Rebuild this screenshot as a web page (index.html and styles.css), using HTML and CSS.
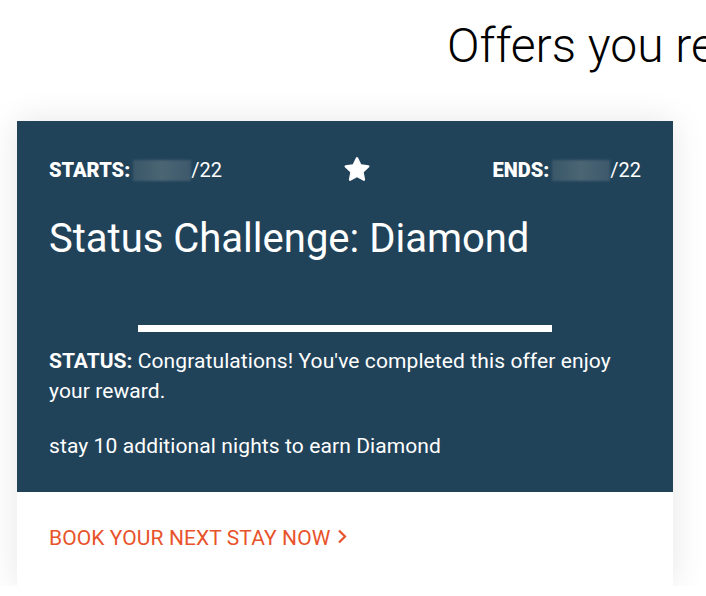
FILE: index.html
```html
<!DOCTYPE html>
<html lang="en">
<head>
  <meta charset="UTF-8" />
  <meta name="viewport" content="width=device-width, initial-scale=1.0"/>
  <title>Offers</title>
  <link rel="stylesheet" href="styles.css">
</head>
<body>
  <h1 class="page-title">Offers you re</h1>

  <div class="offer-card">
    <div class="offer-main">
      <div class="offer-dates">
        <div class="date"><b>STARTS:</b><span class="blur"></span>/22</div>
        <svg class="star" width="30" height="29" viewBox="0 0 24 24">
          <path d="M12 1.6c.4 0 .7.2.9.6l2.6 5.5 6 .8c.8.1 1.1 1.1.5 1.6l-4.4 4.2 1.1 6c.1.8-.7 1.4-1.4 1L12 18.4l-5.3 2.9c-.7.4-1.5-.2-1.4-1l1.1-6-4.4-4.2c-.6-.5-.3-1.5.5-1.6l6-.8 2.6-5.5c.2-.4.5-.6.9-.6z" fill="#fff"/>
        </svg>
        <div class="date"><b>ENDS:</b><span class="blur"></span>/22</div>
      </div>

      <h2 class="offer-title">Status Challenge: Diamond</h2>

      <div class="progress"></div>

      <p class="status"><b>STATUS:</b> Congratulations! You've completed this offer enjoy your reward.</p>
      <p class="status">stay 10 additional nights to earn Diamond</p>
    </div>
    <div class="offer-footer">
      <a class="book-link" href="#">BOOK YOUR NEXT STAY NOW
        <svg class="chev" width="10" height="15" viewBox="0 0 10 15">
          <path d="M2 1.5l6 6-6 6" fill="none" stroke="#e8532b" stroke-width="2.2"/>
        </svg>
      </a>
    </div>
  </div>
</body>
</html>
```

FILE: styles.css
```css
body {
  margin: 0;
  font-family: Roboto, "Liberation Sans", sans-serif;
  background-color: #fff;
  overflow: hidden;
}

.page-title {
  margin: 0;
  padding: 22px 0 0 447px;
  font-size: 48px;
  font-weight: 300;
  line-height: 48px;
  white-space: nowrap;
  color: #000;
}

.offer-card {
  width: 656px;
  margin: 51px 0 0 17px;
  box-shadow: 0 0 32px rgba(0,0,0,0.1);
}

.offer-main {
  background-color: #21435a;
  color: white;
  padding: 36px 32px 31px;
}

.offer-dates {
  display: flex;
  justify-content: space-between;
  align-items: center;
  font-size: 20px;
  height: 26px;
}

.date b {
  font-weight: 900;
}

.blur {
  display: inline-block;
  width: 58px;
  height: 21px;
  margin-left: 3px;
  vertical-align: -4px;
  background: linear-gradient(90deg, #3a5869, #4b6573 50%, #3d596b);
  filter: blur(1px);
}

.star {
  margin-top: -1px;
}

.offer-title {
  margin: 32px 0 0;
  font-size: 40px;
  font-weight: 400;
  line-height: 48px;
}

.progress {
  width: 414px;
  height: 7px;
  margin: 62px auto 0;
  background-color: white;
}

.status {
  margin: 14px 0 0;
  font-size: 21px;
  line-height: 30px;
  letter-spacing: 0.1px;
}

.status + .status {
  margin-top: 25px;
}

.status b {
  font-weight: 700;
  letter-spacing: 0;
}

.offer-footer {
  background-color: white;
  padding: 34px 32px 36px;
}

.book-link {
  display: inline-flex;
  align-items: center;
  gap: 7px;
  color: #e8532b;
  text-decoration: none;
  font-size: 21px;
  letter-spacing: 0.1px;
}

.chev {
  margin-top: -4px;
}
```
